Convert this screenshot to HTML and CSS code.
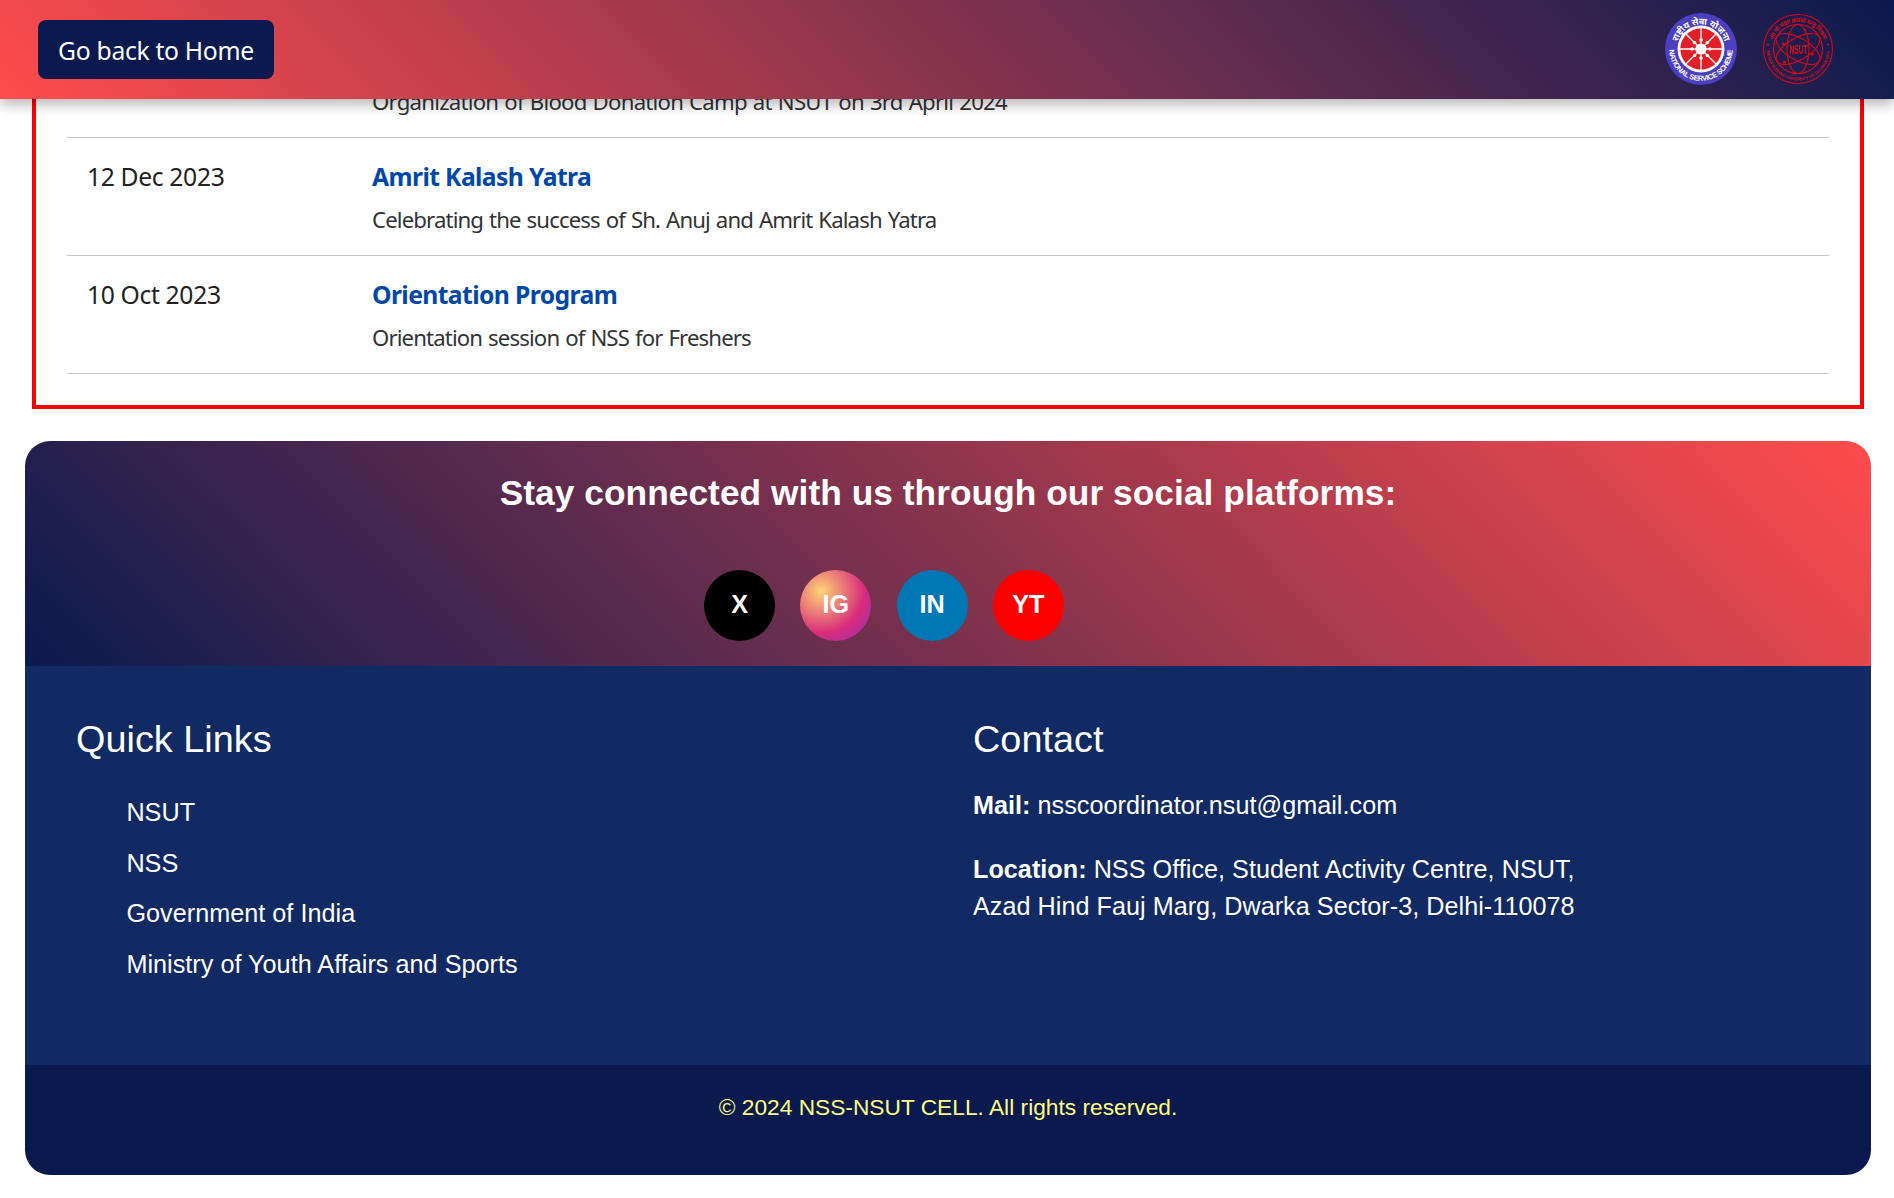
FILE: index.html
```html
<!DOCTYPE html>
<html lang="en">
<head>
<meta charset="utf-8">
<title>NSS-NSUT Events</title>
<link rel="stylesheet" href="styles.css">
</head>
<body>
<header class="topbar">
  <a class="home-btn">Go back to Home</a>
  <div class="logos">
    <svg class="logo" viewBox="0 0 72 72" role="img" aria-label="National Service Scheme">
      <defs>
        <path id="nss-top" d="M11.5 36a24.5 24.5 0 0 1 49 0"/>
        <path id="nss-bottom" d="M4.2 36a31.8 31.8 0 0 0 63.6 0"/>
      </defs>
      <circle cx="36" cy="36" r="36" fill="#4b3fc2"/>
      <circle cx="36" cy="36" r="23.5" fill="#fff"/>
      <circle cx="36" cy="36" r="20.7" fill="#e21f26"/>
      <g stroke="#fff" stroke-width="1.3">
        <path d="M36 15v42M15 36h42M21.2 21.2l29.6 29.6M50.8 21.2L21.2 50.8"/>
      </g>
      <g fill="#fff">
        <circle cx="36" cy="36" r="5.6"/>
        <circle cx="36" cy="27" r="1.7"/><circle cx="36" cy="45" r="1.7"/>
        <circle cx="27" cy="36" r="1.7"/><circle cx="45" cy="36" r="1.7"/>
        <circle cx="29.6" cy="29.6" r="1.7"/><circle cx="42.4" cy="29.6" r="1.7"/>
        <circle cx="29.6" cy="42.4" r="1.7"/><circle cx="42.4" cy="42.4" r="1.7"/>
      </g>
      <text class="nss-hindi"><textPath href="#nss-top" startOffset="50%" text-anchor="middle" textLength="62">राष्ट्रीय सेवा योजना</textPath></text>
      <text class="nss-english"><textPath href="#nss-bottom" startOffset="50%" text-anchor="middle" textLength="98">NATIONAL SERVICE SCHEME</textPath></text>
    </svg>
    <svg class="logo" viewBox="0 0 72 72" role="img" aria-label="NSUT">
      <defs>
        <path id="nsut-top" d="M9 36a27 27 0 0 1 54 0"/>
        <path id="nsut-bottom" d="M4.5 36a31.5 31.5 0 0 0 63 0"/>
      </defs>
      <g fill="none" stroke="#d80812">
        <circle cx="36" cy="36" r="34.5" stroke-width="1.1"/>
        <circle cx="36" cy="36" r="24.5" stroke-width="1.2"/>
        <g stroke-width="1.1">
          <ellipse cx="36" cy="36" rx="11" ry="24.5"/>
          <ellipse cx="36" cy="36" rx="11" ry="24.5" transform="rotate(60 36 36)"/>
          <ellipse cx="36" cy="36" rx="11" ry="24.5" transform="rotate(-60 36 36)"/>
        </g>
      </g>
      <g fill="#d80812">
        <circle cx="21.5" cy="31" r="1.6"/><circle cx="50.5" cy="41" r="1.6"/>
        <circle cx="22.5" cy="49" r="1.6"/><circle cx="43" cy="17" r="1.3"/>
        <circle cx="6" cy="31.5" r="1.1"/><circle cx="66" cy="31.5" r="1.1"/>
      </g>
      <text class="nsut-name" x="36" y="40.5" text-anchor="middle" textLength="18" lengthAdjust="spacingAndGlyphs">NSUT</text>
      <text class="nsut-hindi"><textPath href="#nsut-top" startOffset="50%" text-anchor="middle" textLength="66">आ नो भद्राः क्रतवो यन्तु विश्वतः</textPath></text>
      <text class="nsut-english"><textPath href="#nsut-bottom" startOffset="50%" text-anchor="middle" textLength="95">NETAJI SUBHAS UNIVERSITY OF TECHNOLOGY</textPath></text>
    </svg>
  </div>
</header>

<main class="events">
  <article class="event event-clipped">
    <div class="event-body">
      <p class="event-text organization">Organization of Blood Donation Camp at NSUT on 3rd April 2024</p>
    </div>
  </article>
  <article class="event">
    <time class="event-date">12 Dec 2023</time>
    <div class="event-body">
      <h3 class="event-title">Amrit Kalash Yatra</h3>
      <p class="event-text">Celebrating the success of Sh. Anuj and Amrit Kalash Yatra</p>
    </div>
  </article>
  <article class="event">
    <time class="event-date">10 Oct 2023</time>
    <div class="event-body">
      <h3 class="event-title">Orientation Program</h3>
      <p class="event-text">Orientation session of NSS for Freshers</p>
    </div>
  </article>
</main>

<footer class="footer">
  <section class="social">
    <h2 class="social-title">Stay connected with us through our social platforms:</h2>
    <div class="social-links">
      <a class="social-icon x">X</a>
      <a class="social-icon instagram">IG</a>
      <a class="social-icon linkedin">IN</a>
      <a class="social-icon youtube">YT</a>
    </div>
  </section>
  <section class="info">
    <div>
      <h2 class="info-title">Quick Links</h2>
      <ul class="quick-links">
        <li>NSUT</li>
        <li>NSS</li>
        <li>Government of India</li>
        <li>Ministry of Youth Affairs and Sports</li>
      </ul>
    </div>
    <div>
      <h2 class="info-title">Contact</h2>
      <p class="contact-line"><b>Mail:</b> nsscoordinator.nsut@gmail.com</p>
      <p class="contact-line"><b>Location:</b> NSS Office, Student Activity Centre, NSUT,<br>Azad Hind Fauj Marg, Dwarka Sector-3, Delhi-110078</p>
    </div>
  </section>
  <p class="copyright">© 2024 NSS-NSUT CELL. All rights reserved.</p>
</footer>
</body>
</html>
```
FILE: styles.css
```css
* {
  box-sizing: border-box;
  margin: 0;
  padding: 0;
}

body {
  height: 1198px;
  overflow: hidden;
  background: #fff;
  font-family: "Noto Sans", "Open Sans", sans-serif;
}

.topbar {
  position: sticky;
  top: 0;
  z-index: 10;
  display: flex;
  align-items: center;
  justify-content: space-between;
  height: 99px;
  padding: 0 60px 0 38px;
  background: linear-gradient(45deg, #ff4c4c, #0a1a4f);
  box-shadow: 0 5px 13px rgba(0, 0, 0, 0.3);
}

.home-btn {
  width: 236px;
  height: 59px;
  border-radius: 8px;
  background: #0a1a4f;
  color: #fff;
  font-size: 24.7px;
  line-height: 62px;
  letter-spacing: -0.3px;
  text-align: center;
}

.logos {
  display: flex;
  gap: 25px;
  padding-bottom: 1px;
}

.logo {
  width: 72px;
  height: 72px;
}

.nss-hindi {
  fill: #fff;
  font: bold 9px "Noto Sans Devanagari", "Noto Sans", sans-serif;
}

.nss-english {
  fill: #fff;
  font: bold 7.3px "Liberation Sans", sans-serif;
}

.nsut-name {
  fill: #d80812;
  font: bold 12.5px "Liberation Sans", sans-serif;
}

.nsut-hindi {
  fill: #d80812;
  font: bold 6px "Noto Sans Devanagari", "Noto Sans", sans-serif;
}

.nsut-english {
  fill: #d80812;
  font: bold 4.2px "Liberation Sans", sans-serif;
}

.events {
  margin: -99px 30px 0 32px;
  padding: 16px 31px 31px;
  border: 4px solid #f00;
}

.event {
  display: flex;
  height: 118px;
  padding: 20px 19px 18px 20px;
  border-bottom: 1px solid #c8c8c8;
}

.event-clipped {
  align-items: flex-end;
  padding-left: 305px;
}

.event-date {
  flex: 0 0 285px;
  color: #222;
  font-size: 24.7px;
  line-height: 37px;
  letter-spacing: -0.36px;
}

.event-title {
  margin-bottom: 8px;
  color: #0047ab;
  font-size: 24.7px;
  line-height: 37px;
  letter-spacing: -0.6px;
}

.event-text {
  color: #333;
  font-size: 22.2px;
  line-height: 34px;
  letter-spacing: -0.87px;
  word-spacing: 1px;
}

.organization {
  letter-spacing: -0.77px;
}

.footer {
  margin: 32px 23px 0 25px;
  overflow: hidden;
  border-radius: 25px;
  color: #fff;
  font-family: "Liberation Sans", Arial, sans-serif;
  font-size: 25.2px;
  letter-spacing: 0.03px;
}

.social {
  height: 225px;
  padding: 25px;
  background: linear-gradient(45deg, #0a1a4f, #ff4c4c);
}

.social-title {
  margin-bottom: 51px;
  font-size: 35.28px;
  line-height: 53px;
  letter-spacing: 0.06px;
  text-align: center;
}

.social-links {
  display: flex;
  justify-content: center;
  gap: 25.2px;
  padding-right: 128px;
}

.social-icon {
  width: 71px;
  height: 71px;
  border-radius: 50%;
  font-weight: bold;
  line-height: 69px;
  text-align: center;
}

.x {
  background: #000;
}

.instagram {
  background: radial-gradient(circle at 30% 30%, #fdd575, #d92c7a 60%, #a12fae 90%);
}

.linkedin {
  background: #0077b5;
}

.youtube {
  background: #f00;
}

.info {
  display: grid;
  grid-template-columns: 1fr 1fr;
  gap: 49px;
  height: 399px;
  padding: 51px 50px 48px 51px;
  background: #112a63;
}

.info-title {
  margin-bottom: 25px;
  font-size: 37.8px;
  font-weight: normal;
  line-height: 45.4px;
}

.quick-links {
  padding: 7px 0 0 50.4px;
  list-style: none;
}

.quick-links li {
  margin-bottom: 12.6px;
  line-height: 37.8px;
}

.contact-line {
  margin-bottom: 26px;
  line-height: 37.5px;
}

.copyright {
  height: 110px;
  padding-top: 24px;
  background: #0a1a4f;
  color: #ffff80;
  font-size: 22.68px;
  line-height: 36px;
  text-align: center;
}
```
